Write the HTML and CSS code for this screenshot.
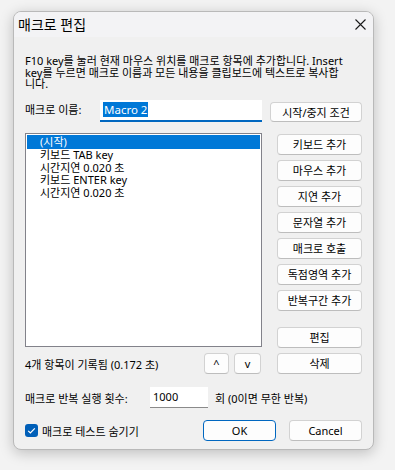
FILE: index.html
```html
<!DOCTYPE html>
<html lang="ko">
<head>
<meta charset="utf-8">
<title>매크로 편집</title>
<link rel="stylesheet" href="styles.css">
</head>
<body>
<div class="window">
  <div class="titlebar">
    <span class="title">매크로 편집</span>
    <svg class="close" width="11" height="11" viewBox="0 0 11 11"><path d="M0.5 0.5 L10.5 10.5 M10.5 0.5 L0.5 10.5" stroke="#1a1a1a" stroke-width="1.1" fill="none"/></svg>
  </div>
  <div class="content">
    <p class="desc">F10 key를 눌러 현재 마우스 위치를 매크로 항목에 추가합니다. Insert<br>key를 누르면 매크로 이름과 모든 내용을 클립보드에 텍스트로 복사합<br>니다.</p>
    <div class="name-row">
      <span class="label name-label">매크로 이름:</span>
      <div class="edit name-edit"><span class="sel">Macro 2</span></div>
      <button class="btn cond">시작/중지 조건</button>
    </div>
    <div class="main">
      <div class="left">
        <div class="listbox">
          <div class="item selected">(시작)</div>
          <div class="item">키보드 TAB key</div>
          <div class="item">시간지연 0.020 초</div>
          <div class="item">키보드 ENTER key</div>
          <div class="item">시간지연 0.020 초</div>
        </div>
        <div class="status">
          <span>4개 항목이 기록됨 (0.172 초)</span>
          <div class="arrows">
            <button class="btn up">^</button>
            <button class="btn down">v</button>
          </div>
        </div>
      </div>
      <div class="side">
        <button class="btn">키보드 추가</button>
        <button class="btn">마우스 추가</button>
        <button class="btn">지연 추가</button>
        <button class="btn">문자열 추가</button>
        <button class="btn">매크로 호출</button>
        <button class="btn">독점영역 추가</button>
        <button class="btn">반복구간 추가</button>
        <button class="btn sep">편집</button>
        <button class="btn">삭제</button>
      </div>
    </div>
    <div class="repeat-row">
      <span class="label">매크로 반복 실행 횟수:</span>
      <div class="edit count-edit">1000</div>
      <span class="label">회 (0이면 무한 반복)</span>
    </div>
    <div class="bottom-row">
      <div class="check-wrap">
        <span class="checkbox"><svg width="13" height="13" viewBox="0 0 13 13"><path d="M3.2 6.8 L5.4 9 L9.8 4.4" stroke="#fff" stroke-width="1.2" fill="none"/></svg></span>
        <span class="label">매크로 테스트 숨기기</span>
      </div>
      <div class="dlg-buttons">
        <button class="btn ok">OK</button>
        <button class="btn">Cancel</button>
      </div>
    </div>
  </div>
</div>
</body>
</html>
```
FILE: styles.css
```css
* { box-sizing: border-box; }
html, body { margin: 0; }
body {
  background: #f3f3f3;
  padding: 11px 0 0 13px;
  font-family: "Noto Sans", "Noto Sans CJK KR", sans-serif;
  font-size: 11px;
  color: #000;
  width: 395px;
  height: 470px;
  overflow: hidden;
}
.window {
  width: 361px;
  height: 439px;
  border: 1px solid #b9b9b9;
  border-radius: 8px;
  background: #f0f0f0;
  box-shadow: 0 3px 14px rgba(0,0,0,0.22);
  overflow: hidden;
}
.titlebar {
  height: 25px;
  background: #f3f3f5;
  display: flex;
  align-items: center;
  justify-content: space-between;
  padding: 0 7px 0 4px;
}
.title { font-size: 14px; line-height: 25px; }
.close { display: block; }
.content { padding: 0 11px; }
.desc {
  margin: 18px 0 0;
  line-height: 11.5px;
  white-space: nowrap;
}
.name-row {
  margin-top: 10.5px;
  height: 22px;
  display: flex;
  align-items: center;
}
.name-label { width: 75px; margin-bottom: 4px; }
.edit { background: #fff; }
.name-edit {
  width: 162px;
  height: 22px;
  border-bottom: 2px solid #0067c0;
  padding: 2px 0 0 3px;
}
.sel {
  display: inline-block;
  background: #0078d7;
  color: #fff;
  font-size: 11.5px;
  line-height: 15px;
  padding: 0 1px;
}
.btn {
  font: inherit;
  color: #000;
  background: #fdfdfd;
  border: 1px solid #d2d2d2;
  border-bottom-color: #bdbdbd;
  border-radius: 4px;
  height: 21px;
  padding: 0;
  margin: 0;
  line-height: 19px;
  text-align: center;
}
.cond { width: 92px; height: 20px; margin-left: 8px; margin-top: 2px; }
.main {
  margin-top: 11px;
  display: grid;
  grid-template-columns: 237px 85px;
  column-gap: 15px;
}
.left { display: flex; flex-direction: column; }
.listbox {
  height: 214px;
  background: #fff;
  border: 1px solid #82828a;
  padding: 1px;
}
.item {
  height: 12.5px;
  line-height: 12.5px;
  padding-left: 13px;
  white-space: nowrap;
}
.item.selected {
  height: 14px;
  line-height: 14px;
  background: #0078d7;
  color: #fff;
}
.status {
  margin-top: 6px;
  height: 21px;
  display: flex;
  align-items: center;
  justify-content: space-between;
}
.arrows { display: flex; gap: 5px; margin-right: 1px; }
.up { width: 25px; }
.down { width: 27px; }
.side {
  margin-top: 1px;
  display: flex;
  flex-direction: column;
  gap: 5px;
}
.side .btn { width: 85px; }
.side .sep { margin-top: 11px; }
.repeat-row {
  margin-top: 13px;
  height: 21px;
  display: flex;
  align-items: center;
}
.repeat-row .label:first-child { width: 125px; }
.count-edit {
  width: 58px;
  height: 21px;
  border-bottom: 1px solid #8a8a8a;
  padding-left: 3px;
  line-height: 20px;
  margin-right: 7px;
}
.bottom-row {
  margin-top: 12px;
  height: 21px;
  display: flex;
  align-items: center;
  justify-content: space-between;
}
.check-wrap { display: flex; align-items: center; gap: 4px; }
.checkbox {
  width: 13px;
  height: 13px;
  background: #005fb8;
  border-radius: 3px;
  display: block;
}
.checkbox svg { display: block; }
.dlg-buttons { display: flex; gap: 13px; }
.dlg-buttons .btn { width: 73px; }
.ok { border: 1px solid #0067c0; }
```
